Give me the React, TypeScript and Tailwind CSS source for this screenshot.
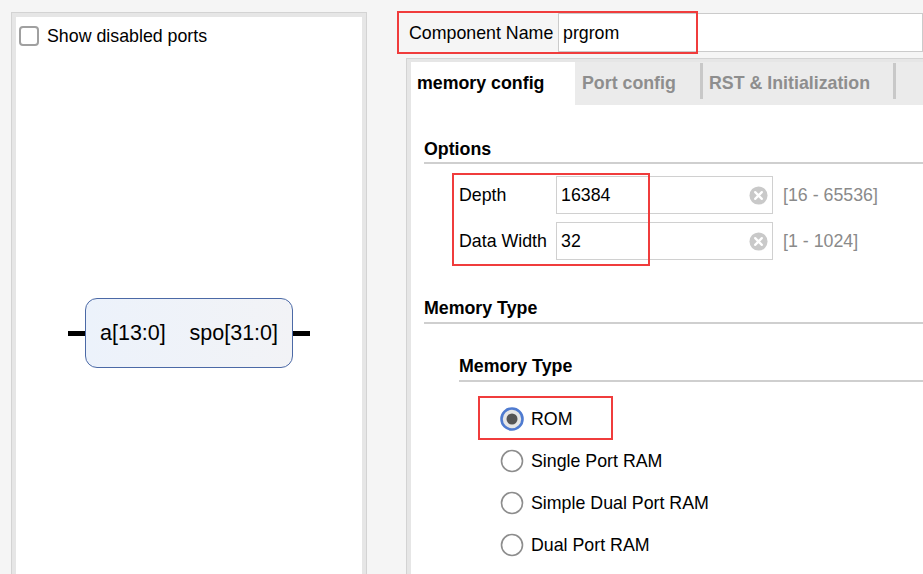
import React from "react";

const font = { fontFamily: '"Liberation Sans", Arial, sans-serif' };

function ClearIcon() {
  return (
    <svg width="19" height="19" viewBox="0 0 20 20">
      <circle cx="10" cy="10" r="9.5" fill="#c9c9c9" />
      <path d="M6.5 6.5 L13.5 13.5 M13.5 6.5 L6.5 13.5" stroke="#fff" strokeWidth="2.4" strokeLinecap="round" />
    </svg>
  );
}

function Radio({ checked }: { checked?: boolean }) {
  return checked ? (
    <svg width="24" height="24" viewBox="0 0 24 24">
      <circle cx="12" cy="12" r="10.5" fill="#e6e6e6" stroke="#4f7bd0" strokeWidth="2.6" />
      <circle cx="12" cy="12" r="5.5" fill="#555" />
    </svg>
  ) : (
    <svg width="24" height="24" viewBox="0 0 24 24">
      <circle cx="12" cy="12" r="10.5" fill="#fff" stroke="#8d8d8d" strokeWidth="1.6" />
    </svg>
  );
}

function NumField({ label, value, range }: { label: string; value: string; range: string }) {
  return (
    <div className="flex items-center">
      <span className="w-[97px]">{label}</span>
      <div className="flex h-[38px] w-[217px] items-center justify-between border border-[#d0d0d0] bg-white pl-[4px] pr-[4px]">
        <span>{value}</span>
        <ClearIcon />
      </div>
      <span className="ml-[10px] text-[#8a8a8a]">{range}</span>
    </div>
  );
}

export default function App() {
  const types = ["ROM", "Single Port RAM", "Simple Dual Port RAM", "Dual Port RAM"];

  return (
    <div style={font} className="flex h-[574px] w-[923px] overflow-hidden bg-[#f5f5f5] text-[17.8px] text-black">
      {/* symbol panel */}
      <div className="ml-[11px] mt-[12px] flex w-[356px] border-l border-r border-t border-[#d3d3d3] bg-[#e6e6e6] px-[4px] pt-[4px]">
        <div className="flex-1 bg-white pl-[3px] pt-[9px]">
          <label className="flex items-center gap-[8px] leading-[20px]">
            <span className="h-[20px] w-[20px] rounded-[4px] border-2 border-[#a0a0a0] bg-white" />
            Show disabled ports
          </label>
          <div className="mt-[252px] flex items-center justify-center pr-[3px]">
            <div className="h-[5px] w-[17px] bg-black" />
            <div className="flex h-[70px] w-[208px] items-center justify-between rounded-[12px] border border-[#4b69a6] bg-gradient-to-r from-[#ecf2fb] to-[#f2f3f6] px-[14px] text-[21.5px]">
              <span>a[13:0]</span>
              <span>spo[31:0]</span>
            </div>
            <div className="h-[5px] w-[17px] bg-black" />
          </div>
        </div>
      </div>

      {/* config side */}
      <div className="ml-[39px] flex flex-1 flex-col">
        <div className="relative mt-[13px] flex h-[39px] items-center">
          <span className="w-[152px] pl-[3px] pt-[1px]">Component Name</span>
          <div className="flex h-full flex-1 items-center border border-[#cbcbcb] bg-white pl-[4px] pt-[1px]">prgrom</div>
          <div className="absolute left-[-9px] top-[-2px] h-[43px] w-[301px] border-2 border-[#f03c3c]" />
        </div>

        <div className="mt-[6px] flex flex-1 flex-col border-l border-t border-[#d3d3d3] bg-[#e6e6e6] pl-[4px] pt-[3px]">
          <div className="flex h-[43px] bg-[#ebebeb] font-bold">
            <div className="flex w-[164px] items-center bg-white pl-[6px]">memory config</div>
            <div className="flex w-[125px] items-center pl-[7px] text-[#8e8e8e]">Port config</div>
            <div className="mt-[1px] h-[36px] w-[3px] bg-[#c8c8c8]" />
            <div className="flex w-[190px] items-center pl-[6px] text-[#8e8e8e]">RST &amp; Initialization</div>
            <div className="mt-[1px] h-[36px] w-[3px] bg-[#c8c8c8]" />
          </div>

          <div className="flex-1 bg-white pl-[13px] pt-[34px]">
            <div className="font-bold leading-[20px]">Options</div>
            <div className="mt-[3px] h-[2px] bg-[#cfcfcf]" />

            <div className="relative ml-[35px] mt-[12px] flex flex-col gap-[8px]">
              <NumField label="Depth" value="16384" range="[16 - 65536]" />
              <NumField label="Data Width" value="32" range="[1 - 1024]" />
              <div className="absolute left-[-7px] top-[-3px] h-[93px] w-[198px] border-2 border-[#f03c3c]" />
            </div>

            <div className="mt-[38px] font-bold leading-[20px]">Memory Type</div>
            <div className="mt-[4px] h-[2px] bg-[#cfcfcf]" />

            <div className="ml-[35px]">
              <div className="mt-[32px] font-bold leading-[20px]">Memory Type</div>
              <div className="mt-[4px] h-[2px] bg-[#cfcfcf]" />
              <div className="mt-[16px]">
                {types.map((t, i) => (
                  <div key={t} className="relative flex h-[42px] items-center gap-[7px] pl-[41px]">
                    <Radio checked={i === 0} />
                    <span>{t}</span>
                    {i === 0 && (
                      <div className="absolute left-[19px] top-[-2px] h-[44px] w-[135px] border-2 border-[#f03c3c]" />
                    )}
                  </div>
                ))}
              </div>
            </div>
          </div>
        </div>
      </div>
    </div>
  );
}
